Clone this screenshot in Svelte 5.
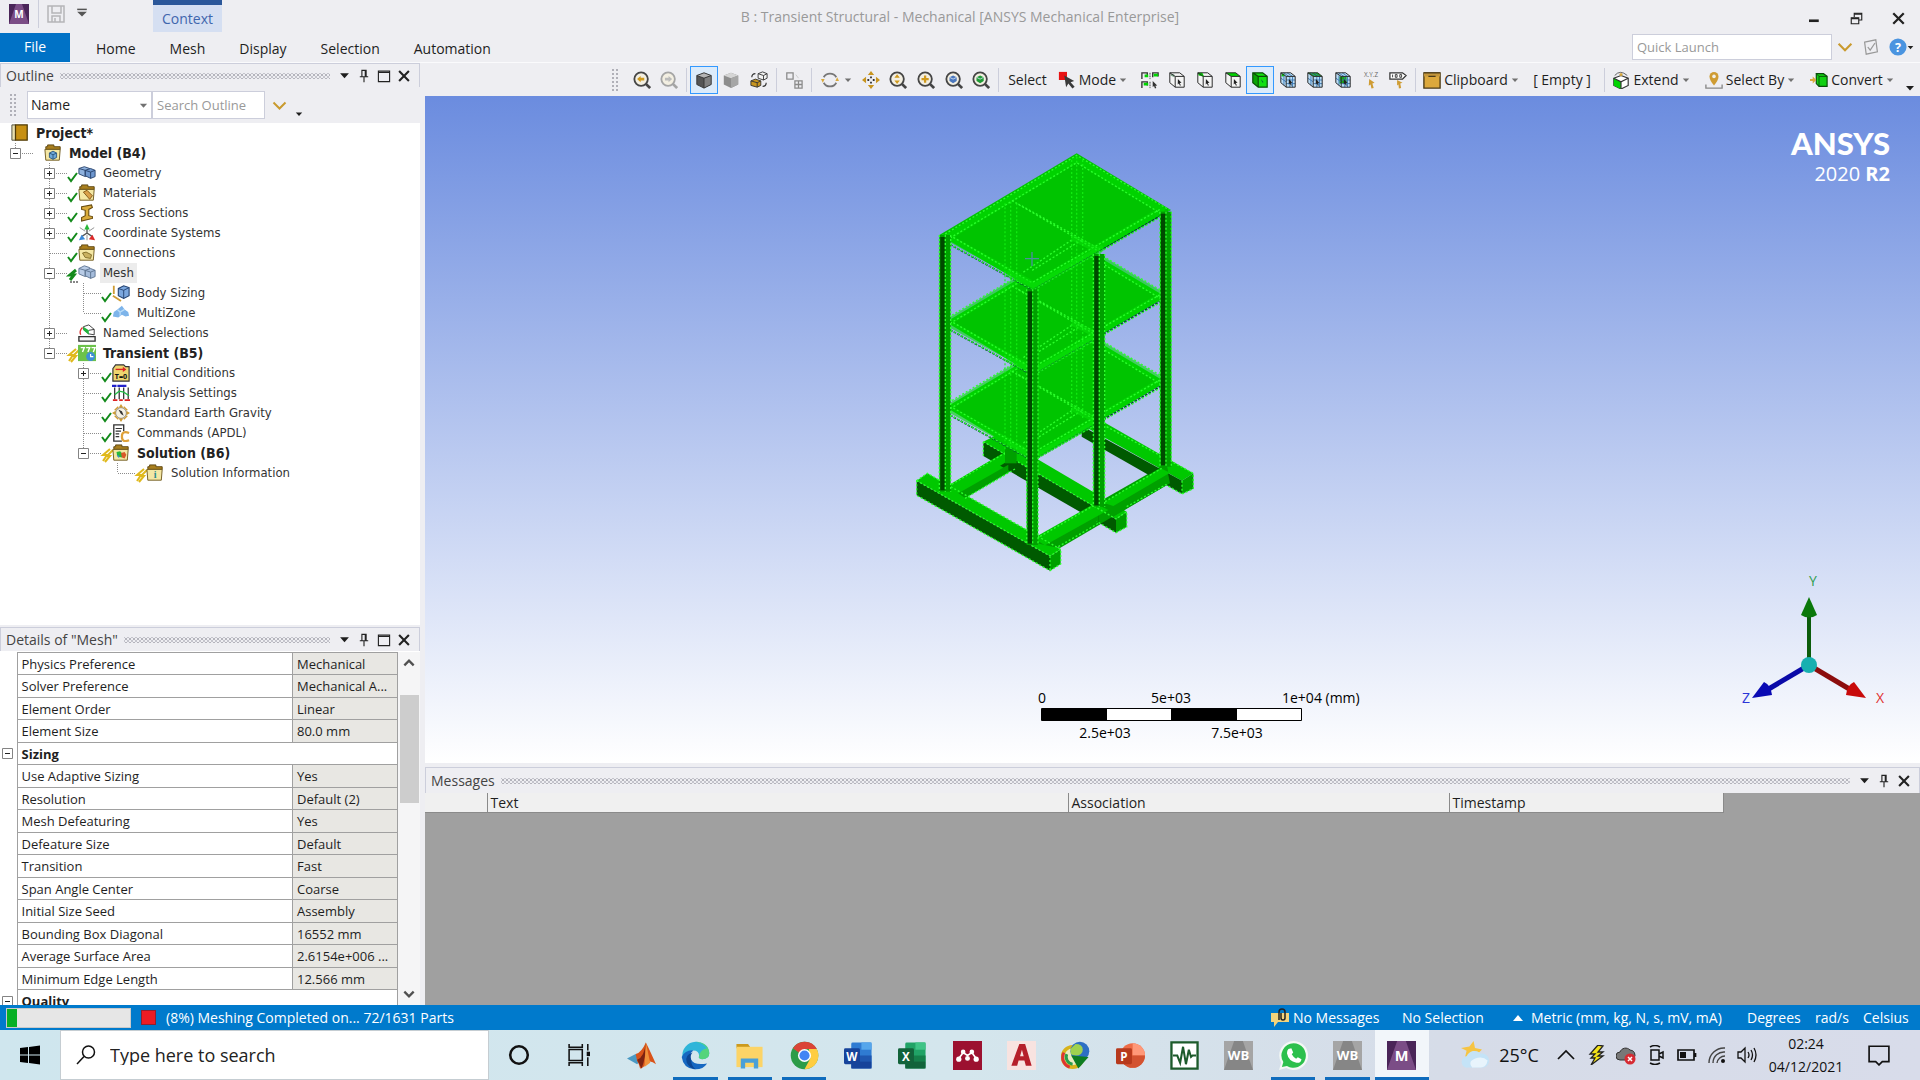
<script>
  const G = '#00d400';
  const cube = (fill, grid) =>
    `<path d="M2 2h11l5 4v12H8L2 13z" fill="${grid ? '#b9dcf5' : '#f4f4f4'}"/>${fill}` +
    (grid ? '<path d="M5.5 5v11M12 6v12M15 6v12M8 10h10M8 14h10M2 8l6 4M5 2l6 4M9 2l6 4" stroke="#3c78b4" fill="none"/>' : '') +
    '<path d="M2 2h11l5 4v12H8L2 13zM2 2l6 4v12M8 6h10" fill="none" stroke="#2b2b2b" stroke-width="1.1"/>' +
    '<path d="M11 9l4 4-2 .3 1.3 2.5-1 .5-1.200-2.500-1.300 1.200z" fill="#222"/>';
  const lens = (inner, c = '#454545') =>
    `<circle cx="9" cy="9" r="7.5" fill="#f3efe2" stroke="${c}" stroke-width="2"/><path d="M14 14l5 5" stroke="${c}" stroke-width="3"/>${inner}`;
  const block = (a, b, c, s = '#333') =>
    `<path d="M2 5l8-3 8 3v10l-8 4-8-4z" fill="${a}"/><path d="M2 5l8-3 8 3-8 3z" fill="${b}"/><path d="M10 8l8-3v10l-8 4z" fill="${c}"/><path d="M2 5l8-3 8 3v10l-8 4-8-4zM2 5l8 3 8-3M10 8v11" fill="none" stroke="${s}"/>`;
  const folder = (inner) =>
    `<path d="M2 5V3h2V1h7v2h7v3H2z" fill="#a97f1e" stroke="#5a430c"/><path d="M1 6h17l-1 12H2z" fill="#f4e7a4" stroke="#6b5518"/>${inner}`;
  const wb = (bg, tri, txt, s) =>
    `<rect width="20" height="20" fill="${bg}"/><path d="M7 0h6l7 20H0z" fill="${tri}"/><text x="10" y="${s > 9 ? 14 : 13}" text-anchor="middle" font-family="Open Sans" font-weight="700" font-size="${s}" fill="#fff">${txt}</text>`;
  const office = (a, b, c, d, l) =>
    `<rect x="5" y="1" width="14" height="18" rx="1" fill="${a}"/><path d="M12 1h7v5h-7z" fill="${b}"/><path d="M5 10h14v4H5z" fill="${c}"/><path d="M5 14h14v5H5z" fill="${d}"/><rect x="0" y="5" width="11" height="11" rx="1" fill="${d}"/><text x="5.5" y="13.5" text-anchor="middle" font-family="Open Sans" font-weight="700" font-size="8" fill="#fff">${l}</text>`;

  const icons = {
    save: '<path d="M2 2h16v16H2zM6 2v7h9V2M6 18v-6h8v6M9 14v4" fill="none" stroke="#b5b5b8" stroke-width="1.5"/>',
    qat: '<path d="M2 4h16" stroke="#555" stroke-width="2.5"/><path d="M2 8h16l-8 8z" fill="#555"/>',
    mech: wb('#4a2558', '#7b4d86', 'M', 10),
    caret: '<path d="M2 6h16l-8 9z" fill="currentColor"/>',
    pin: '<path d="M7 2h6v9H7zM4 11h12M10 11v8" fill="none" stroke="#222" stroke-width="1.6"/><path d="M11 2h2v9h-2z" fill="#222"/>',
    max: '<path d="M2 3h16v15H2zM2 5h16" fill="none" stroke="#222" stroke-width="1.6"/>',
    close: '<path d="M3 3l14 14M17 3L3 17" stroke="#222" stroke-width="3"/>',
    min: '<path d="M4 13h13" stroke="#222" stroke-width="3.5"/>',
    restore: '<path d="M3 9h10v8H3zM7 8V3h10v9h-4" fill="none" stroke="#222" stroke-width="1.5"/><path d="M3 9h10v2H3zM7 3h10v2H7z" fill="#222"/>',
    chev: '<path d="M2 6l8 8 8-8" fill="none" stroke="#c99a2e" stroke-width="2.6"/>',
    note: '<path d="M2 4l14-3 2 15-14 3z" fill="none" stroke="#999" stroke-width="1.5"/><path d="M6 10l3 4 6-9" fill="none" stroke="#999" stroke-width="1.5"/>',
    help: '<circle cx="10" cy="10" r="9.5" fill="#4a94e0"/><text x="10" y="15" text-anchor="middle" font-family="Open Sans" font-weight="700" font-size="14" fill="#fff">?</text>',
    zprev: lens('<path d="M4.5 9l4-3.500v2h4v3h-4v2z" fill="#d09a1e"/>'),
    znext: lens('<path d="M13.5 9l-4-3.500v2h-4v3h4v2z" fill="#bbb"/>', '#a5a5a5'),
    shaded: block('#555', '#b5b5b5', '#808080'),
    solid: block('#8d8d8d', '#d5d5d5', '#a6a6a6', 'none'),
    swap: '<path d="M9 3l5-2 5 2v5l-4 2-6-2z" fill="#f2f2f2" stroke="#333"/><path d="M9 3l6 2v5M15 5l4-2" fill="none" stroke="#333"/><path d="M1 11l5-2 6 2v5l-4 2-7-2z" fill="#c8951f" stroke="#333"/><path d="M1 11l7 2v5M8 13l4-2" fill="none" stroke="#333"/><path d="M2 7q0-4 4-4M18 13q0 4-4 4" fill="none" stroke="#333" stroke-width="1.3"/>',
    tile: '<path d="M2 2h7v7H2zM11 11h8v8h-8zM15 11v8M11 15h8" fill="none" stroke="#8a8a8a" stroke-width="1.4"/><path d="M12 4l3 4" stroke="#c8c8c8"/>',
    rotate: '<path d="M3 7a8 8 0 0 1 14 0M17 13a8 8 0 0 1-14 0" fill="none" stroke="#777" stroke-width="2"/><path d="M0 9l2 4 2-4zM20 11l-2-4-2 4z" fill="#d9a93c"/>',
    pan: '<path d="M10 0l3.5 4.500h-7zM10 20l3.500-4.500h-7zM0 10l4.500-3.500v7zM20 10l-4.500-3.500v7z" fill="#c8951f"/><path d="M9 6h2v2H9zM9 12h2v2H9zM6 9h2v2H6zM12 9h2v2h-2z" fill="#333"/>',
    zoom: lens('<path d="M9 3.500l3 4H6zM9 14.500l3-4H6z" fill="#d09a1e"/>'),
    zin: lens('<path d="M5 9h8M9 5v8" stroke="#d09a1e" stroke-width="2.5"/>'),
    zfit: lens('<path d="M5 7l4-2 4 2v4l-4 2.500L5 11z" fill="#4b77bd"/><path d="M5 7l4 2 4-2" stroke="#cde" fill="none"/>'),
    zsel: lens('<path d="M5 7l4-2 4 2v4l-4 2.500L5 11z" fill="#1f9b35"/><path d="M5 7l4 2 4-2" stroke="#cde" fill="none"/>'),
    mode: '<path d="M1 1h9v9H1z" fill="#e81313"/><path d="M7 5l11 6-4 1.500 4.500 5-2.500 2-4.500-5.500-2.500 4z" fill="#3a3a3a"/>',
    smart: `<path d="M1 9V2h6v4M13 7V2h6v4M1 19v-7h6v4" fill="none" stroke="#333" stroke-width="1.5"/><path d="M4 4h4v3H4zM14 3h5v3h-5zM3 13h5v3H3z" fill="${G}"/><path d="M13 11l5 5-2 .3 1 2.700-1.500.5-1-2.700-1.500 1z" fill="#333"/><path d="M10 2v7M10 12v7" stroke="#333" stroke-dasharray="2 1"/>`,
    vertex: cube(`<path d="M3 3l4 1v3L3 5z" fill="#7aa88a"/>`),
    edge: cube(`<path d="M2 2h5l2 4H8L3 5z" fill="${G}"/>`),
    face: cube(`<path d="M2 2h11l5 4H8z" fill="${G}"/>`),
    body: `<path d="M2 2h11l5 4v12H8L2 13z" fill="#12e012"/><path d="M2 2l6 4v12l-6-5z" fill="#07a507"/><path d="M2 2h11l5 4v12H8L2 13zM2 2l6 4v12M8 6h10" fill="none" stroke="#0a4d0a" stroke-width="1.3"/><path d="M11 9l3 3.500-1.500.3z" fill="#063"/>`,
    node: cube(`<path d="M3 3h3v3H3z" fill="${G}"/>`, true),
    nface: cube('<path d="M2 2h11l5 4H8z" fill="#17a517"/>', true),
    elem: cube('<path d="M6 6h8v8H6z" fill="#17a517"/>', true),
    xyz: '<text x="10" y="7" text-anchor="middle" font-family="Open Sans" font-size="7" fill="#666">X.Y.Z</text><path d="M8 9l6 4-2.500 1 1.500 5-2.500.5-1-4.500-2 1.500z" fill="#cf9c33"/>',
    tag: '<path d="M1 2h14l4 3-4 4H1z" fill="#fff" stroke="#333" stroke-width="1.4"/><path d="M4 4v3M7 4h2v3H7zM12 4h2v3h-2z" stroke="#333" fill="none"/><path d="M9 10l6 3-2.500 1 1 5-2.500.5-.5-4.500-1.500 1z" fill="#cf9c33"/>',
    clip: '<path d="M1 2h18v17H1z" fill="#dca83c" stroke="#4a3a18" stroke-width="1.5"/><path d="M1 2h18v4H1z" fill="#c4963a"/><path d="M1 2h18M6 6h8" stroke="#4a3a18" stroke-width="1.5"/>',
    extend: `<path d="M2 8l8-3 8 3v8l-8 4-8-4z" fill="#fff" stroke="#333" stroke-width="1.3"/><path d="M2 8l8 4v8l-8-4z" fill="${G}"/><path d="M2 8l8 4 8-4M10 12v8" fill="none" stroke="#333" stroke-width="1.3"/><path d="M3 5q6-7 14 0" fill="none" stroke="#555"/><path d="M10 2l2 2-2 2-2-2z" fill="#d9a93c"/>`,
    selby: '<path d="M10 1a5 5 0 0 1 5 5q0 4-5 10Q5 10 5 6a5 5 0 0 1 5-5z" fill="#cf9c33"/><circle cx="10" cy="6" r="2" fill="#f2f0ea"/><path d="M1 15v4h18v-4" fill="none" stroke="#888" stroke-width="1.5"/>',
    convert: `<path d="M7 3h8l4 3v11h-9l-3-3z" fill="#12d012" stroke="#0a4d0a" stroke-width="1.3"/><path d="M7 3l3 3v11M10 6h9" fill="none" stroke="#0a4d0a"/><path d="M0 9h3V6l4 4-4 4v-3H0z" fill="#d9a93c"/>`,
    project: '<path d="M1 1h4v17H1z" fill="#e8dfae" stroke="#443" /><path d="M5 1h13v17H5z" fill="#c79012" stroke="#4f3a06" stroke-width="1.4"/>',
    model: folder('<path d="M6 10l4-2 4 2v5l-4 2-4-2z" fill="#6ea7d8" stroke="#2b577f"/><path d="M6 10l4 2 4-2M10 12v5" fill="none" stroke="#2b577f"/>'),
    geometry: '<path d="M1 5l6-2 6 2v7l-5 2-7-3z" fill="#8fb2de" stroke="#27426b"/><path d="M8 7l6-2 5 2v7l-5 2-6-3z" fill="#6e97cf" stroke="#27426b"/><path d="M1 5l7 2v6M8 7l6 2v7M14 9l5-2" fill="none" stroke="#27426b"/>',
    meshi: '<path d="M1 5l6-3 6 2v8l-5 2-7-3z" fill="#b9cce6" stroke="#5c7390"/><path d="M8 7l6-2 5 2v7l-5 2-6-3z" fill="#a6bddc" stroke="#5c7390"/><path d="M1 5l7 2v6M8 7l6 2v7M14 9l5-2" fill="none" stroke="#5c7390"/>',
    materials: folder('<path d="M6 9l4-2 6 6-3 4z" fill="#d9a04a" stroke="#7d5415"/>'),
    section: '<path d="M4 3l11-2 1 3-4 2v7l4 1v2L4 19v-4l4-2V7L4 6z" fill="#d9ab3c" stroke="#66490c" stroke-width="1.2"/>',
    coord: '<path d="M10 10V5M10 10l6 4M10 10l-6 4" stroke="#555" stroke-width="1.5"/><path d="M10 0l3 6H7z" fill="#29b839"/><path d="M19 18l-7-1 4-5z" fill="#dd2a2a"/><path d="M1 18l7-1-4-5z" fill="#3c88d8"/><path d="M2 4l6 4M18 4l-6 4M10 12v6" stroke="#888"/>',
    connections: folder('<path d="M5 10l4-1 6 3-1 4-6-1z" fill="#c9b160" stroke="#7d6a25"/>'),
    sizing: '<path d="M7 5l6-3 6 2v9l-6 3-6-3z" fill="#7ba7de" stroke="#22416f" stroke-width="1.2"/><path d="M7 5l6 2 6-3M13 7v9" fill="none" stroke="#22416f"/><path d="M2 2v9M1 13l9 6" stroke="#cf9c33" stroke-width="2"/>',
    multi: '<path d="M6 6l5-4 3 4 4 3 1 4-4 1-4-2-4 3-6-1 1-5z" fill="#7db4ea"/><path d="M6 6l3 3 5-3M9 9v4" stroke="#b7dbf8" fill="none" stroke-width="1.5"/>',
    named: '<path d="M6 3l6-2 6 5v6l-6-1-6-5z" fill="#fff" stroke="#333"/><path d="M6 3l6 4v5l-6-5z" fill="#22b53c"/><path d="M12 7l6-1" stroke="#333"/><path d="M5 4q-4 4-2 8" fill="none" stroke="#d33" stroke-width="1.5"/><path d="M1 14h18v5H1z" fill="#f6f6f6" stroke="#333" stroke-width="1.5"/>',
    transient: '<path d="M0 1h20v18H0z" fill="#6cc24a"/><path d="M3 4h4l-2 5M9 4h4l-2 5M15 4h4l-2 5" stroke="#fff" fill="none" stroke-width="1.5"/><circle cx="14" cy="14" r="5" fill="#3f8fd6"/><path d="M14 11v3h3" stroke="#fff" fill="none" stroke-width="1.3"/>',
    initial: '<path d="M1 5l3-4h9l2 2h4v16H1z" fill="#eed56f" stroke="#333" stroke-width="1.3"/><path d="M4 6h9" stroke="#d22" stroke-width="1.5"/><path d="M12 3l4 3-4 3z" fill="#d22"/><text x="10" y="17" text-anchor="middle" font-family="Open Sans" font-weight="700" font-size="8" fill="#111">T=0</text>',
    analysis: '<path d="M3 4v13M8 4v13M13 4v13M18 4v13" stroke="#222" stroke-width="1.3"/><path d="M0 2h5M6 2h5M11 2h5" stroke="#22c" stroke-width="2.5"/><path d="M1 18h5M8 18h4M14 18h6" stroke="#d22" stroke-width="2"/><path d="M3 12l5-4 5 1 6 4" stroke="#2b4" stroke-width="1.5" fill="none"/>',
    gravity: '<circle cx="10" cy="10" r="6" fill="#f5f1e3" stroke="#777"/><path d="M10 0l2.500 4h-5zM10 20l2.500-4h-5zM0 10l4-2.500v5zM20 10l-4-2.500v5z" fill="#cf9c33"/><path d="M7 6l4 2 2 5-3-2z" fill="#333"/><path d="M3 7l4-4M13 3l4 4M3 13l4 4M17 13l-4 4" stroke="#cf9c33" stroke-width="1.5"/>',
    commands: '<path d="M11 19H2V1h11v7" fill="#fff" stroke="#333" stroke-width="1.5"/><path d="M4 5h7M4 8h6M4 11h4M4 14h4" stroke="#333" stroke-width="1.3"/><path d="M19 10q-8-3-8 4t8 4" fill="none" stroke="#dfa23a" stroke-width="2.5"/>',
    solution: folder('<path d="M5 9l4-1 3 3-1 4-5-1z" fill="#29b839"/><path d="M10 10l4-1 2 3-2 4-3-1z" fill="#d85a2a"/><path d="M5 12l3 1v3z" fill="#3c88d8"/>'),
    info: folder('<text x="10" y="16" text-anchor="middle" font-family="Liberation Serif" font-weight="700" font-size="11" fill="#2a8c8c">i</text>'),
    win: '<path d="M0 3l8-1v7.500H0zM9 1.900L20 .5v9H9zM0 10.500h8V18l-8-1zM9 10.500h11v9L9 18.100z" fill="#000"/>',
    search: '<circle cx="12.5" cy="7" r="6" fill="none" stroke="#111" stroke-width="1.5"/><path d="M8 11.500L1 19" stroke="#111" stroke-width="1.5"/>',
    cortana: '<circle cx="10" cy="10" r="8" fill="none" stroke="#111" stroke-width="2.3"/>',
    taskview: '<path d="M1 5h12v10H1zM1 0v3h12V0M1 20v-3h12v3M18 0v6M18 12v8" fill="none" stroke="#111" stroke-width="1.4"/><path d="M17 7h3v4h-3z" fill="#111"/>',
    matlab: '<path d="M0 12l6-3 4 4-3 3z" fill="#4a9ac4"/><path d="M6 9q4-1 7-8 3 6 7 15-4-3-6-1-3 4-5 4-1-4-2-5z" fill="#d95319"/><path d="M13 1q-1 10-6 12l3 6q3-7 3-18z" fill="#7d2312"/><path d="M13 1l3 14-4 3z" fill="#f0913a"/>',
    edgeb: '<path d="M1 11A9.500 9.500 0 0 1 10 .5q9 .5 9.500 8 0 4-5 4-3-.5-2-2 0-4-4-4-5 0-7.500 4.500z" fill="#2fb5d9"/><path d="M10 .5q9 .5 9.500 8 0 4-5 4-3-.5-2-2Q13 6 18 5q-3-4-8-4.500z" fill="#54d47c"/><path d="M.5 11Q3 6 8.500 6.500 5 9 7 13t11 2.500Q15 20 9 19.500 1.500 18.500.5 11z" fill="#1668c1"/><path d="M7 13q-1-3 1-5-6 2-4 7 2 4 6 4.500-3-2-3-6.500z" fill="#0c4795"/>',
    files: '<path d="M1 2h8l2 3H1z" fill="#cc9a1e"/><path d="M1 4h18v14H1z" fill="#fcd467"/><path d="M4 19v-7h12v7h-3v-4H7v4z" fill="#4aa0d8"/>',
    chrome: '<circle cx="10" cy="10" r="9.5" fill="#2c9c48"/><path d="M10 .5a9.500 9.500 0 0 1 8.500 5H10L6 8 2 5A9.500 9.500 0 0 1 10 .5z" fill="#db4437"/><path d="M18.500 5.500A9.500 9.500 0 0 1 10 19.500l4-7.500-1-6.500z" fill="#ffcd40"/><circle cx="10" cy="10" r="4.5" fill="#fff"/><circle cx="10" cy="10" r="3.5" fill="#4285f4"/>',
    word: office('#2f7bd2', '#55a6ec', '#1f57b0', '#16439a', 'W'),
    excel: office('#21a366', '#3fc486', '#15804a', '#12633a', 'X'),
    mendeley: '<path d="M0 0h20v20H0z" fill="#9c1130"/><path d="M4 12l3-4 3 2 3-2 3 4" fill="none" stroke="#fff" stroke-width="1.2"/><circle cx="4" cy="12.5" r="1.8" fill="#fff"/><circle cx="10" cy="12" r="1.7" fill="#fff"/><circle cx="16" cy="12.5" r="1.8" fill="#fff"/><circle cx="7" cy="7.5" r="1.6" fill="#fff"/><circle cx="13" cy="7.5" r="1.6" fill="#fff"/>',
    acad: '<path d="M0 0h20v20H0z" fill="#f8e3e0"/><path d="M3 17L8.500 2h4L17 17h-4l-1-3.500H8L7 17zM9 10.500h2.500L10.300 6z" fill="#b51f2a" fill-rule="evenodd"/>',
    idm: '<circle cx="8" cy="11" r="7" fill="#e9ecc0" stroke="#d8b31c" stroke-width="2.5"/><path d="M2 8a7 7 0 0 0 4 10" fill="none" stroke="#d33" stroke-width="2"/><path d="M4 9a5 5 0 0 0 4 7" fill="none" stroke="#2a9d4a" stroke-width="2"/><circle cx="13" cy="7" r="6.5" fill="#2d6fc4"/><path d="M10 2q5 0 5 4t-5 4-3-5z" fill="#9fd24f"/><path d="M7 10l12 1-7 8z" fill="#0d7d22"/>',
    ppt: '<circle cx="11.5" cy="10" r="8.5" fill="#ed6c47"/><path d="M11.500 1.500a8.500 8.500 0 0 1 8.500 8.500h-8.500z" fill="#ff9878"/><path d="M3 10h17a8.500 8.500 0 0 1-17 0z" fill="#d35230"/><rect x="0" y="5" width="11" height="11" rx="1" fill="#b7391c"/><text x="5.5" y="13.5" text-anchor="middle" font-family="Open Sans" font-weight="700" font-size="8" fill="#fff">P</text>',
    wave: '<path d="M1 1h18v18H1z" fill="#fff" stroke="#1d5b2b" stroke-width="1.6"/><path d="M2 10h3l2 5L9 4l2 12 2-10 1.500 5 1-1H18" fill="none" stroke="#1d5b2b" stroke-width="1.4"/>',
    wb: wb('#a5a5a5', '#868686', 'WB', 9),
    whatsapp: '<path d="M10 0a10 10 0 1 1-5 18.600L0 20l1.500-5A10 10 0 0 1 10 0z" fill="#f4f8f5"/><path d="M10 1.500a8.500 8.500 0 1 1-4.500 15.700L2 18l1-3.500A8.500 8.500 0 0 1 10 1.500z" fill="#2cc04c"/><path d="M6.500 5.500l2-.5 1.300 3-1 1.200q1 2 3 3l1.200-1 2.500 1.300q-.5 3-3.500 2.500-5.500-1-6.500-6.500 0-2 1-3z" fill="#fff"/>',
    weather: '<path d="M9 0l1 5 5 1-4 4-8 1 1-4-4-2 6-1z" fill="#f6c443"/><path d="M5 19a4 4 0 0 1-1-8 6 6 0 0 1 10-2 5 5 0 0 1 2 10z" fill="#c4e3f7"/><path d="M8 19q-4-5 4-7 4-1 7 2-1 5-5 5z" fill="#e8f4fc"/>',
    up: '<path d="M2 14l8-8 8 8" fill="none" stroke="#111" stroke-width="1.7"/>',
    bolt: '<path d="M12 0L4 9h5l-4 4h4l-4 7 12-9h-5l5-4h-5l5-6z" fill="#f3e21b" stroke="#222" stroke-width="1.3"/>',
    cloud: '<path d="M4 15a4 4 0 0 1 0-8 6 6 0 0 1 10-2 5 5 0 0 1 4 8l-4 2z" fill="#777" stroke="#333"/><circle cx="14" cy="14" r="5.5" fill="#d62b33"/><path d="M12 12l4 4M16 12l-4 4" stroke="#fff" stroke-width="1.5"/>',
    cam: '<path d="M5 5h8v10H5zM13 9l4-2v6l-4-2M4 2q5-3 10 0M4 18q5 3 10 0" fill="none" stroke="#111" stroke-width="1.5"/>',
    battery: '<path d="M1 5h16v10H1zM18.500 8v4" fill="none" stroke="#111" stroke-width="1.7"/><path d="M3 7h6v6H3z" fill="#111"/>',
    wifi: '<path d="M2 18A15 15 0 0 1 18 3M6 18A11 11 0 0 1 18 7M10 18a8 8 0 0 1 8-7" fill="none" stroke="#444" stroke-width="1.4"/><circle cx="16" cy="16" r="2" fill="#111"/>',
    sound: '<path d="M1 7h3l4-4v14l-4-4H1zM11 7q2 3 0 6M14 5q3 5 0 10M17 3q4 7 0 14" fill="none" stroke="#111" stroke-width="1.3"/>',
    action: '<path d="M1 2h18v14h-6l-3 3-3-3H1z" fill="none" stroke="#111" stroke-width="1.5"/>',
    msg: '<path d="M1 5h18v9h-11l-4 5v-5H1z" fill="#f3d37c"/><path d="M9 12V4q0-3 3-3t3 3v6q0 2-2 2t-2-2V5" fill="none" stroke="#222" stroke-width="1.5"/>'
  };

  const tabs = ['Home', 'Mesh', 'Display', 'Selection', 'Automation'];
  const zooms = ['pan', 'zoom', 'zin', 'zfit', 'zsel'];
  const filters = ['smart', 'vertex', 'edge', 'face', 'body', 'node', 'nface', 'elem', 'xyz', 'tag'];
  const apps = ['matlab', 'edgeb', 'files', 'chrome', 'word', 'excel', 'mendeley', 'acad', 'idm', 'ppt', 'wave', 'wb', 'whatsapp', 'wb', 'mech'];
  const running = [1, 2, 3, 12, 13, 14];
  const tray = ['up', 'bolt', 'cloud', 'cam', 'battery', 'wifi', 'sound'];

  // v: which parts of the vertical guide show in the row; g: guides of the outer levels
  const tree = [
    { d: 0, t: 'Project*', i: 'project', b: 1, g: [] },
    { d: 1, t: 'Model (B4)', i: 'model', b: 1, g: [], e: '-', v: 'up' },
    { d: 2, t: 'Geometry', i: 'geometry', g: [0], e: '+', m: 'check', v: 'all' },
    { d: 2, t: 'Materials', i: 'materials', g: [0], e: '+', m: 'check', v: 'all' },
    { d: 2, t: 'Cross Sections', i: 'section', g: [0], e: '+', m: 'check', v: 'all' },
    { d: 2, t: 'Coordinate Systems', i: 'coord', g: [0], e: '+', m: 'check', v: 'all' },
    { d: 2, t: 'Connections', i: 'connections', g: [0], m: 'check', v: 'all' },
    { d: 2, t: 'Mesh', i: 'meshi', g: [0], e: '-', m: 'work', v: 'all', sel: 1 },
    { d: 3, t: 'Body Sizing', i: 'sizing', g: [0, 1], m: 'check', v: 'all' },
    { d: 3, t: 'MultiZone', i: 'multi', g: [0, 1], m: 'check', v: 'up' },
    { d: 2, t: 'Named Selections', i: 'named', g: [0], e: '+', v: 'all' },
    { d: 2, t: 'Transient (B5)', i: 'transient', b: 1, g: [0], e: '-', m: 'bolt', v: 'up' },
    { d: 3, t: 'Initial Conditions', i: 'initial', g: [0, 0], e: '+', m: 'check', v: 'all' },
    { d: 3, t: 'Analysis Settings', i: 'analysis', g: [0, 0], m: 'check', v: 'all' },
    { d: 3, t: 'Standard Earth Gravity', i: 'gravity', g: [0, 0], m: 'check', v: 'all' },
    { d: 3, t: 'Commands (APDL)', i: 'commands', g: [0, 0], m: 'check', v: 'all' },
    { d: 3, t: 'Solution (B6)', i: 'solution', b: 1, g: [0, 0], e: '-', m: 'bolt', v: 'up' },
    { d: 4, t: 'Solution Information', i: 'info', g: [0, 0, 0], m: 'bolt', v: 'up' }
  ];

  const details = [
    ['Physics Preference', 'Mechanical'],
    ['Solver Preference', 'Mechanical A...'],
    ['Element Order', 'Linear'],
    ['Element Size', '80.0 mm'],
    ['Sizing'],
    ['Use Adaptive Sizing', 'Yes'],
    ['Resolution', 'Default (2)'],
    ['Mesh Defeaturing', 'Yes'],
    ['Defeature Size', 'Default'],
    ['Transition', 'Fast'],
    ['Span Angle Center', 'Coarse'],
    ['Initial Size Seed', 'Assembly'],
    ['Bounding Box Diagonal', '16552 mm'],
    ['Average Surface Area', '2.6154e+006 ...'],
    ['Minimum Edge Length', '12.566 mm'],
    ['Quality']
  ];

  const floors = [512, 256, 0];
  const columns = [[148, 315, 1085], [410, 478, 1245], [610, 372, 1130], [810, 245, 1010]];
</script>

{#snippet icon(name)}
  <svg class="ic" viewBox="0 0 20 20" aria-hidden="true">{@html icons[name]}</svg>
{/snippet}

{#snippet titleBar(text, max)}
  <div class="title">
    <h2>{text}</h2>
    <span class="dots"></span>
    <button class="tb small" aria-label="Menu">{@render icon('caret')}</button>
    <button class="tb" aria-label="Pin">{@render icon('pin')}</button>
    {#if max}<button class="tb" aria-label="Maximize">{@render icon('max')}</button>{/if}
    <button class="tb" aria-label="Close">{@render icon('close')}</button>
  </div>
{/snippet}

<div class="app">
  <header>
    <div class="top">
      <span class="logo">{@render icon('mech')}</span>
      <span class="vr"></span>
      <button class="qa" aria-label="Save">{@render icon('save')}</button>
      <button class="qa small" aria-label="Customize">{@render icon('qat')}</button>
      <span class="context">Context</span>
      <h1>B : Transient Structural - Mechanical [ANSYS Mechanical Enterprise]</h1>
      <div class="winctl">
        <button aria-label="Minimize">{@render icon('min')}</button>
        <button aria-label="Restore">{@render icon('restore')}</button>
        <button aria-label="Close window">{@render icon('close')}</button>
      </div>
    </div>
    <nav>
      <button class="file">File</button>
      {#each tabs as t}<button class="tab">{t}</button>{/each}
      <input class="quick" aria-label="Quick Launch" placeholder="Quick Launch" />
      <div class="navic">
        <button aria-label="Search">{@render icon('chev')}</button>
        <button aria-label="Feedback">{@render icon('note')}</button>
        <button class="help" aria-label="Help">{@render icon('help')}<span class="mini">{@render icon('caret')}</span></button>
      </div>
    </nav>
  </header>

  <main>
    <aside>
      <section class="outline">
        {@render titleBar('Outline', true)}
        <div class="find">
          <span class="grip"></span>
          <div class="combo">
            <select aria-label="Filter by"><option>Name</option></select>
            <span class="mini">{@render icon('caret')}</span>
          </div>
          <input aria-label="Search Outline" placeholder="Search Outline" />
          <button aria-label="Expand">{@render icon('chev')}</button>
          <span class="more">{@render icon('caret')}</span>
        </div>
        <ul class="tree">
          {#each tree as n}
            <li>
              {#each n.g as g}
                <svg class="guide" viewBox="0 0 34 20">{#if g}<path class="dot" d="M15.5 0v20" />{/if}</svg>
              {/each}
              {#if n.d}
                <svg class="branch" viewBox="0 0 44 20">
                  <path class="dot" d={n.v === 'all' ? 'M15.5 0v20' : 'M15.5 0v10'} />
                  <path class="dot" d="M16 10.5h18" />
                  {#if n.e}
                    <path class="box" d="M10.5 5.5h10v10h-10z" />
                    <path class="sign" d={n.e === '+' ? 'M13 10.5h5M15.5 8v5' : 'M13 10.5h5'} />
                  {/if}
                  {#if n.m === 'check'}<path class="check" d="M34 14l3 4 6-8" />
                  {:else if n.m === 'work'}<path class="check thick" d="M42 7l-6 5h4l-4 5" /><path class="dot dk" d="M36 19h8" />
                  {:else if n.m === 'bolt'}<path class="boltm" d="M42 6l-7 6h4l-4 6M45 7l-6 6h3l-5 6" />{/if}
                </svg>
              {:else}<span class="root"></span>{/if}
              {@render icon(n.i)}
              <span class="label" class:bold={n.b} class:sel={n.sel}>{n.t}</span>
            </li>
          {/each}
        </ul>
      </section>

      <section class="details">
        {@render titleBar('Details of "Mesh"', true)}
        <div class="dbody">
          <table>
            <tbody>
              {#each details as r}
                <tr>
                  <td class="gut">{#if r.length === 1}<svg class="fold" viewBox="0 0 11 11"><path class="box" d="M.5 .5h10v10H.5z" /><path class="sign" d="M3 5.5h5" /></svg>{/if}</td>
                  {#if r.length === 1}<th colspan="2">{r[0]}</th>
                  {:else}<td class="name">{r[0]}</td><td class="val">{r[1]}</td>{/if}
                </tr>
              {/each}
            </tbody>
          </table>
          <div class="scroll">
            <svg class="arrow" viewBox="0 0 12 12"><path d="M2 8l4-4 4 4" /></svg>
            <span class="thumb"></span>
            <svg class="arrow" viewBox="0 0 12 12"><path d="M2 4l4 4 4-4" /></svg>
          </div>
        </div>
      </section>
    </aside>

    <div class="work">
      <div class="bar">
        <span class="grip"></span>
        <div class="g2"><button aria-label="Previous view">{@render icon('zprev')}</button><button aria-label="Next view">{@render icon('znext')}</button></div>
        <span class="vr"></span>
        <div class="g3"><button class="on" aria-label="Shaded with edges">{@render icon('shaded')}</button><button aria-label="Shaded">{@render icon('solid')}</button><button aria-label="Swap">{@render icon('swap')}</button></div>
        <span class="vr"></span>
        <button class="one" aria-label="Viewports">{@render icon('tile')}</button>
        <span class="vr"></span>
        <button class="one rot" aria-label="Rotate">{@render icon('rotate')}<span class="mini">{@render icon('caret')}</span></button>
        <div class="g5">{#each zooms as z}<button aria-label={z}>{@render icon(z)}</button>{/each}</div>
        <span class="vr"></span>
        <span class="lab w-sel">Select</span>
        <button class="tx w-mode">{@render icon('mode')}Mode<span class="mini">{@render icon('caret')}</span></button>
        <div class="g10">{#each filters as f}<button class:on={f === 'body'} aria-label={f}>{@render icon(f)}</button>{/each}</div>
        <span class="vr"></span>
        <button class="tx w-clip">{@render icon('clip')}Clipboard<span class="mini">{@render icon('caret')}</span></button>
        <span class="lab w-empty">[ Empty ]</span>
        <span class="vr"></span>
        <button class="tx w-ext">{@render icon('extend')}Extend<span class="mini">{@render icon('caret')}</span></button>
        <button class="tx w-by">{@render icon('selby')}Select By<span class="mini">{@render icon('caret')}</span></button>
        <button class="tx w-conv">{@render icon('convert')}Convert<span class="mini">{@render icon('caret')}</span></button>
        <span class="more">{@render icon('caret')}</span>
      </div>

      <div class="view">
        <div class="brand"><strong>ANSYS</strong><span>2020 <b>R2</b></span></div>

        <svg class="frame" viewBox="0 0 990 1350" aria-label="Meshed building frame">
          <g class="lit">
            <path d="M560 876l60-12 290 166-34 22z" />
            <path d="M280 935l40-20 390 230-32 22z" />
            <path d="M165 1075l200-122 50 40-190 112-40-8z" />
            <path d="M430 1228l400-228 10 60-330 194-50-12z" class="mid" />
            <path d="M80 1052l32-22 400 228-32 20z" />
          </g>
          <g class="dark">
            <path d="M575 888l301 164v40L575 920z" />
            <path d="M280 935l398 232v41L280 978z" />
            <path d="M80 1052l400 226v44L80 1096z" />
          </g>
          <g class="mid">
            <path d="M876 1052l34-22v46l-34 16z" /><path d="M678 1167l32-22v46l-32 17z" /><path d="M480 1278l32-20v44l-32 20z" />
            <path d="M625 1128l205-118 10 50-215 125z" /><path d="M440 1240l185-110v50l-130 72z" />
            <path d="M205 1090l150-86v22l-130 78z" />
          </g>
          <g class="lit"><path d="M430 1225l185-105 40 20-190 106z" /><path d="M640 1118l170-104 30 14-170 100z" /><path d="M165 1072l190-112 20 20-175 106z" /></g>
          <path class="rim" d="M80 1052l400 226 32-20M80 1052l32-22 400 228v44l-32 20L80 1096zM480 1278v44M280 935l398 232 32-22v46l-32 17-58-34M280 935v43M650 890l260 140v46l-34 16-48-28M876 1052v40M225 1105l150-88M505 1250l120-70M710 1130l118-66M165 1075l190-112M440 1225l180-104M645 1115l170-100" />
          <rect class="mid" x="345" y="900" width="35" height="100" />

          {#each floors as y}
            <g transform="translate(0 {y})">
              <path class="slab" d={y ? 'M168 320L365 203 560 85 828 245 430 478z' : 'M148 315L560 70 843 240 430 478z'} />
              <path class="edge" d="M170 338l258 142 396-230" />
              <path class="haze" d="M172 322L560 88 822 244M180 326l250 138 386-224" />
              <path class="rim" d="M155 318L560 76 838 240M170 330L560 98 812 250M160 332l270 148 405-232M190 322l236 136 384-220M366 212l260 152M385 222l245 136M545 330l-150 100M575 330l-150 92" />
              <path class="blur" d="M640 352l-212 120M545 322l90 44M350 430l90 40" />
            </g>
          {/each}
          <path class="ghost" d="M345 220v740M362 215v740M380 220v740M545 90v780M560 80v780M578 90v780" />

          {#each columns as [x, a, b]}
            <rect class="mid" {x} y={a} width="34" height={b - a} />
            <rect class="shade" x={x + 3} y={a + 6} width="13" height={b - a - 10} />
            <path class="rim" d="M{x} {a}V{b}M{x + 18} {a}V{b}M{x + 34} {a}V{b}" />
          {/each}
          <path class="cross" d="M405 386h42M426 366v42" />
        </svg>

        <svg class="scale" viewBox="0 0 330 50" aria-label="Scale">
          <text x="10" y="12">0</text><text x="139" y="12">5e+03</text><text x="250" y="12" class="first">1e+04 (mm)</text>
          <path class="open" d="M9.5 17.5h260v12h-260z" /><path d="M10 17h65v13H10zM139 17h66v13h-66z" />
          <text x="73" y="47">2.5e+03</text><text x="205" y="47">7.5e+03</text>
        </svg>

        <svg class="triad" viewBox="0 0 150 130" aria-label="Axes">
          <path d="M70 86V30" stroke="#0b5c0b" stroke-width="4" /><path d="M70 18l-8 18q8 5 16 0z" fill="#0a780a" />
          <path d="M70 86l42 25" stroke="#8c0d0d" stroke-width="5" /><path d="M127 119l-12-16q-7 3-8 13z" fill="#c80a0a" />
          <path d="M70 86l-42 25" stroke="#0a0aa8" stroke-width="5" /><path d="M13 119l12-16q7 3 8 13z" fill="#0a0ab4" />
          <circle cx="70" cy="86" r="8" fill="#17b0b0" />
          <text x="74" y="7" fill="#2f9e4f">Y</text><text x="141" y="124" fill="#e03030">X</text><text x="7" y="124" fill="#2b35d8">Z</text>
        </svg>
      </div>

      <section class="messages">
        {@render titleBar('Messages', false)}
        <table>
          <thead><tr><td class="c0"></td><th class="c1">Text</th><th class="c2">Association</th><th class="c3">Timestamp</th></tr></thead>
        </table>
      </section>
    </div>
  </main>

  <footer class="status">
    <progress value="8" max="100" aria-label="Meshing progress"></progress>
    <button class="stop" aria-label="Stop"></button>
    <span class="grow">(8%) Meshing Completed on... 72/1631 Parts</span>
    <span class="msgs">{@render icon('msg')}No Messages</span>
    <span class="s2">No Selection</span>
    <span class="s3"><svg class="tri" viewBox="0 0 10 10"><path d="M0 8l5-6 5 6z" fill="#fff" /></svg>Metric (mm, kg, N, s, mV, mA)</span>
    <span class="s4">Degrees</span>
    <span class="s5">rad/s</span>
    <span class="s6">Celsius</span>
  </footer>

  <div class="task">
    <button class="start" aria-label="Start">{@render icon('win')}</button>
    <label class="tsearch">{@render icon('search')}<input aria-label="Type here to search" placeholder="Type here to search" /></label>
    <button class="sys" aria-label="Cortana">{@render icon('cortana')}</button>
    <button class="sys" aria-label="Task view">{@render icon('taskview')}</button>
    <div class="apps">
      {#each apps as a, k}
        <button aria-label={a} class:run={running.includes(k)} class:active={k === 14}>{@render icon(a)}</button>
      {/each}
    </div>
    <button class="weather">{@render icon('weather')}25°C</button>
    <div class="tray">{#each tray as t}<button aria-label={t}>{@render icon(t)}</button>{/each}</div>
    <div class="clock"><span>02:24</span><span>04/12/2021</span></div>
    <button class="act" aria-label="Notifications">{@render icon('action')}</button>
  </div>
</div>

<style>
  :global(body) { margin: 0; }
  .app { height: 100vh; display: flex; flex-direction: column; overflow: hidden; background: #eeeef2; color: #1e1e1e; font: 14px/20px "Open Sans", "Noto Sans", sans-serif; }
  * { box-sizing: border-box; }
  button { border: 0; padding: 0; background: none; font: inherit; color: inherit; display: flex; align-items: center; justify-content: center; }
  input, select { font: inherit; color: inherit; border: 1px solid #cccedb; background: #fff; border-radius: 0; }
  input::placeholder { color: #999; opacity: 1; }
  h1, h2 { margin: 0; font-weight: 400; font-size: inherit; }
  .ic { width: 20px; height: 20px; flex: none; display: block; }
  .mini .ic { width: 9px; height: 9px; }
  .mini { color: #717171; display: flex; }
  .vr { width: 1px; align-self: stretch; background: #cccedb; flex: none; }
  .grip { width: 8px; flex: none; background: radial-gradient(#b0b0b8 1px, transparent 1px) 0 0 / 4px 4px; }

  header { flex: none; border-bottom: 1px solid #fafafc; }
  .top { height: 32px; display: flex; align-items: stretch; }
  .logo { padding: 4px 9px; } .top .vr { height: 28px; }
  .qa { width: 34px; height: 28px; } .qa.small { width: 18px; height: 26px; margin-right: 2px; }
  .qa.small .ic { width: 12px; height: 12px; }
  .context { width: 69px; margin-left: 60px; border-top: 5px solid #2b579a; background: #d5dff2; color: #3f66ad; text-align: center; line-height: 27px; }
  h1 { flex: 1; text-align: center; line-height: 34px; color: #999; padding-left: 46px; }
  .winctl { display: flex; width: 168px; margin-left: 100px; justify-content: space-between; padding: 4px 14px 0 54px; }
  .winctl .ic { width: 15px; height: 15px; }
  nav { height: 30px; display: flex; align-items: center; }
  .file { width: 70px; height: 29px; background: #0072c6; color: #fff; }
  .tab { padding: 3px 17px 0; height: 30px; } .tab:nth-child(2) { margin-left: 9px; }
  .quick { margin-left: auto; width: 200px; height: 26px; padding: 0 4px; font-size: 13px; }
  .navic { display: flex; align-items: center; gap: 10px; padding: 0 6px 0 5px; }
  .navic .ic { width: 16px; height: 16px; } .navic .help .ic { width: 18px; height: 18px; }
  .navic .help .mini { color: #222; } .navic .help .mini .ic { width: 7px; height: 7px; }

  main { flex: 1; min-height: 0; display: flex; gap: 5px; }
  aside { width: 420px; flex: none; display: flex; flex-direction: column; gap: 2px; }
  .title { height: 24px; flex: none; display: flex; align-items: center; gap: 4px; padding: 0 7px 0 5px; border: 1px solid #cccedb; border-bottom: 0; color: #444; }
  .dots { flex: 1; height: 6px; margin: 0 2px; background: radial-gradient(#b4b4bc 1px, transparent 1px) 0 0 / 4px 4px, radial-gradient(#c4c4cc 1px, transparent 1px) 2px 2px / 4px 4px; }
  .tb { width: 16px; height: 20px; color: #1e1e1e; } .tb .ic { width: 14px; height: 14px; } .tb.small .ic { width: 11px; height: 11px; }
  .outline { flex: 1; min-height: 0; display: flex; flex-direction: column; }
  .find { height: 36px; flex: none; display: flex; align-items: center; padding-left: 9px; }
  .find .grip { height: 24px; margin-right: 10px; }
  .combo { position: relative; width: 125px; height: 28px; }
  .combo select { appearance: none; width: 100%; height: 28px; padding: 0 3px; }
  .combo .mini { position: absolute; right: 4px; top: 10px; pointer-events: none; }
  .find input { width: 113px; height: 28px; padding: 0 4px; font-size: 13px; }
  .find button { width: 28px; } .find button .ic { width: 15px; height: 15px; }
  .more { align-self: flex-end; padding: 0 0 5px 2px; } .more .ic { width: 8px; height: 8px; }
  .tree { flex: 1; margin: 0; padding: 0; list-style: none; background: #fff; font: 13px/20px "DejaVu Sans Condensed", "DejaVu Sans", sans-serif; color: #333; }
  .tree li { display: flex; height: 20px; align-items: center; }
  .guide { width: 34px; height: 20px; flex: none; } .branch { width: 44px; height: 20px; flex: none; overflow: visible; }
  .root { width: 11px; }
  .tree .ic { width: 18px; height: 18px; }
  .dot { stroke: #8c8c8c; stroke-dasharray: 1 1; fill: none; } .dk { stroke: #111; stroke-dasharray: 2 1; }
  .box { fill: #fff; stroke: #848484; } .sign { stroke: #222; fill: none; }
  .check { fill: none; stroke: #138a1b; stroke-width: 2; } .thick { stroke-width: 3; } .boltm { fill: none; stroke: #e0b91c; stroke-width: 2; }
  .label { padding: 0 3px; margin-left: 4px; } .label.bold { font-weight: 700; font-size: 14px; color: #222; } .sel { background: #ececec; }

  .details { height: 378px; flex: none; display: flex; flex-direction: column; }
  .dbody { flex: 1; min-height: 0; overflow: hidden; display: flex; padding-top: 1px; background: #fff; }
  .dbody table { width: 398px; border-collapse: collapse; table-layout: fixed; font-size: 13px; line-height: 18px; align-self: flex-start; }
  .dbody tr { height: 22px; } .dbody tr:nth-child(even) { height: 23px; }
  .dbody td, .dbody th { padding: 0 4px; border: 1px solid #a0a0a0; text-align: left; white-space: nowrap; overflow: hidden; }
  .dbody .gut { width: 17px; border: 0; padding: 0 0 0 2px; } .dbody .val { width: 105px; background: #e8e7e3; }
  .fold { width: 11px; height: 11px; display: block; }
  .scroll { flex: 1; display: flex; flex-direction: column; align-items: center; padding: 4px 0; background: #f5f5f6; }
  .arrow { width: 14px; height: 14px; } .arrow path { fill: none; stroke: #505050; stroke-width: 2; }
  .thumb { width: 19px; height: 108px; margin: 25px 0 auto; background: #cdcdcd; }

  .work { flex: 1; min-width: 0; display: flex; flex-direction: column; }
  .bar { height: 33px; flex: none; display: flex; align-items: center; justify-content: flex-end; padding: 1px 5px 0 0; }
  .bar .grip { height: 24px; margin-right: 9px; }
  .bar .vr { margin: 4px 3px; }
  .bar .ic { width: 18px; height: 18px; } .bar .mini .ic { width: 8px; height: 8px; }
  .bar button { height: 28px; }
  .g2, .g3, .g5, .g10 { display: grid; grid-auto-flow: column; grid-auto-columns: 1fr; flex: none; }
  .g2 { width: 55px; } .g3 { width: 83px; } .g5 { width: 138px; } .g10 { width: 276px; }
  .on { border: 1px solid #3399ff; background: #dcebfa; }
  .one { width: 28px; } .one.rot { width: 42px; gap: 5px; }
  .lab { text-align: center; white-space: nowrap; } .tx { white-space: nowrap; gap: 3px; }
  .w-sel { width: 51px; } .w-mode { width: 79px; margin-right: 4px; }
  .w-clip { width: 104px; } .w-empty { width: 78px; } .w-ext { width: 86px; } .w-by { width: 104px; margin-left: 4px; } .w-conv { width: 94px; margin-left: 3px; }
  .bar .more { padding: 0 0 3px 6px; } .bar .more .ic { width: 10px; height: 10px; }

  .view { flex: 1; position: relative; overflow: hidden; background: linear-gradient(#6b8cdf, #fff); }
  .brand { position: absolute; right: 30px; top: 30px; color: #fff; display: flex; flex-direction: column; align-items: flex-end; font-size: 20px; line-height: 26px; }
  .brand strong { font: 900 31px/35px Lato, "Open Sans", sans-serif; }
  .frame { position: absolute; left: calc(50% - 283px); top: 34px; width: 330px; height: 450px; }
  .lit path { fill: #00c800; } .dark path { fill: #005a00; } .mid, .lit .mid, .mid path { fill: #00a000; }
  .slab { fill: #00c400; } .edge { fill: none; stroke: #043; stroke-width: 5; stroke-dasharray: 8 4; }
  .haze { fill: none; stroke: #00dc00; stroke-width: 20; opacity: 0.6; }
  .rim { fill: none; stroke: #2cff2c; stroke-width: 4; stroke-dasharray: 6 6; } .blur { fill: none; stroke: #0ae20a; stroke-width: 18; opacity: 0.5; }
  .ghost { fill: none; stroke: #14f514; stroke-width: 4; stroke-dasharray: 6 6; opacity: 0.8; }
  .shade { fill: #004a00; } .cross { stroke: #4b8f9e; stroke-width: 4; fill: none; }
  .scale { position: absolute; left: calc(50% - 141px); bottom: 22px; width: 330px; height: 50px; text-anchor: middle; overflow: visible; }
  .scale .first { text-anchor: start; } .open { fill: #fff; stroke: #000; }
  .triad { position: absolute; right: 31px; bottom: 54px; width: 150px; height: 130px; overflow: visible; text-anchor: middle; }

  .messages { height: 238px; flex: none; margin-top: 4px; background: #a0a0a0; }
  .messages .title { height: 26px; background: #eeeef2; }
  .messages table { border-collapse: collapse; table-layout: fixed; width: 1299px; line-height: 18px; background: #f0f0f0; }
  .messages th, .messages td { font-weight: 400; text-align: left; padding: 1px 3px 0; border: solid #8a8a8a; border-width: 0 1px 1px 0; }
  .c0 { width: 62px; } .c1 { width: 581px; } .c2 { width: 381px; }

  .status { height: 25px; flex: none; background: #007acc; color: #fff; display: flex; align-items: center; white-space: nowrap; }
  progress { appearance: none; width: 125px; height: 20px; margin-left: 6px; border: 1px solid #c9c9c9; }
  progress::-webkit-progress-bar { background: #e6e6e6; } progress::-webkit-progress-value { background: #06b025; }
  .stop { width: 15px; height: 15px; margin: 0 10px; background: #ed1c24; border: 1px solid #902030; }
  .grow { flex: 1; }
  .msgs { display: flex; align-items: center; gap: 3px; width: 132px; } .s2 { width: 111px; } .s3 { width: 234px; display: flex; align-items: center; gap: 8px; } .s4 { width: 68px; } .s5 { width: 48px; } .s6 { width: 57px; }
  .tri { width: 10px; height: 10px; }

  .task { height: 50px; flex: none; display: flex; align-items: stretch; background: linear-gradient(90deg, #cfe6ee, #d4e6ed 50%, #d6dce8 75%, #d8dcea); color: #111; }
  .start { width: 60px; } .tsearch { width: 429px; display: flex; align-items: center; gap: 13px; padding-left: 15px; background: #fff; border: 1px solid #c5cdd2; }
  .tsearch input { border: 0; padding: 0 1px; flex: 1; font-size: 18px; } .tsearch input::placeholder { color: #222; }
  .sys { width: 60px; } .sys .ic { width: 22px; height: 22px; }
  .apps { width: 815px; margin-left: 5px; display: grid; grid-auto-flow: column; grid-auto-columns: 1fr; }
  .apps .ic { width: 29px; height: 29px; } .apps button { position: relative; }
  .apps .run::after { content: ""; position: absolute; left: 5px; right: 5px; bottom: 0; height: 3px; background: #0f6cbd; }
  .apps .active { background: #f2f6fa; } .apps .active::after { left: 0; right: 0; }
  .weather { margin-left: auto; width: 90px; gap: 10px; font-size: 18px; } .weather .ic { width: 28px; height: 28px; }
  .tray { display: grid; grid-auto-flow: column; grid-auto-columns: 1fr; width: 211px; margin-left: 6px; }
  .clock { width: 80px; margin-left: 4px; display: flex; flex-direction: column; justify-content: center; text-align: center; line-height: 23px; }
  .act { width: 66px; margin-right: 8px; } .act .ic { width: 22px; height: 22px; }
</style>
